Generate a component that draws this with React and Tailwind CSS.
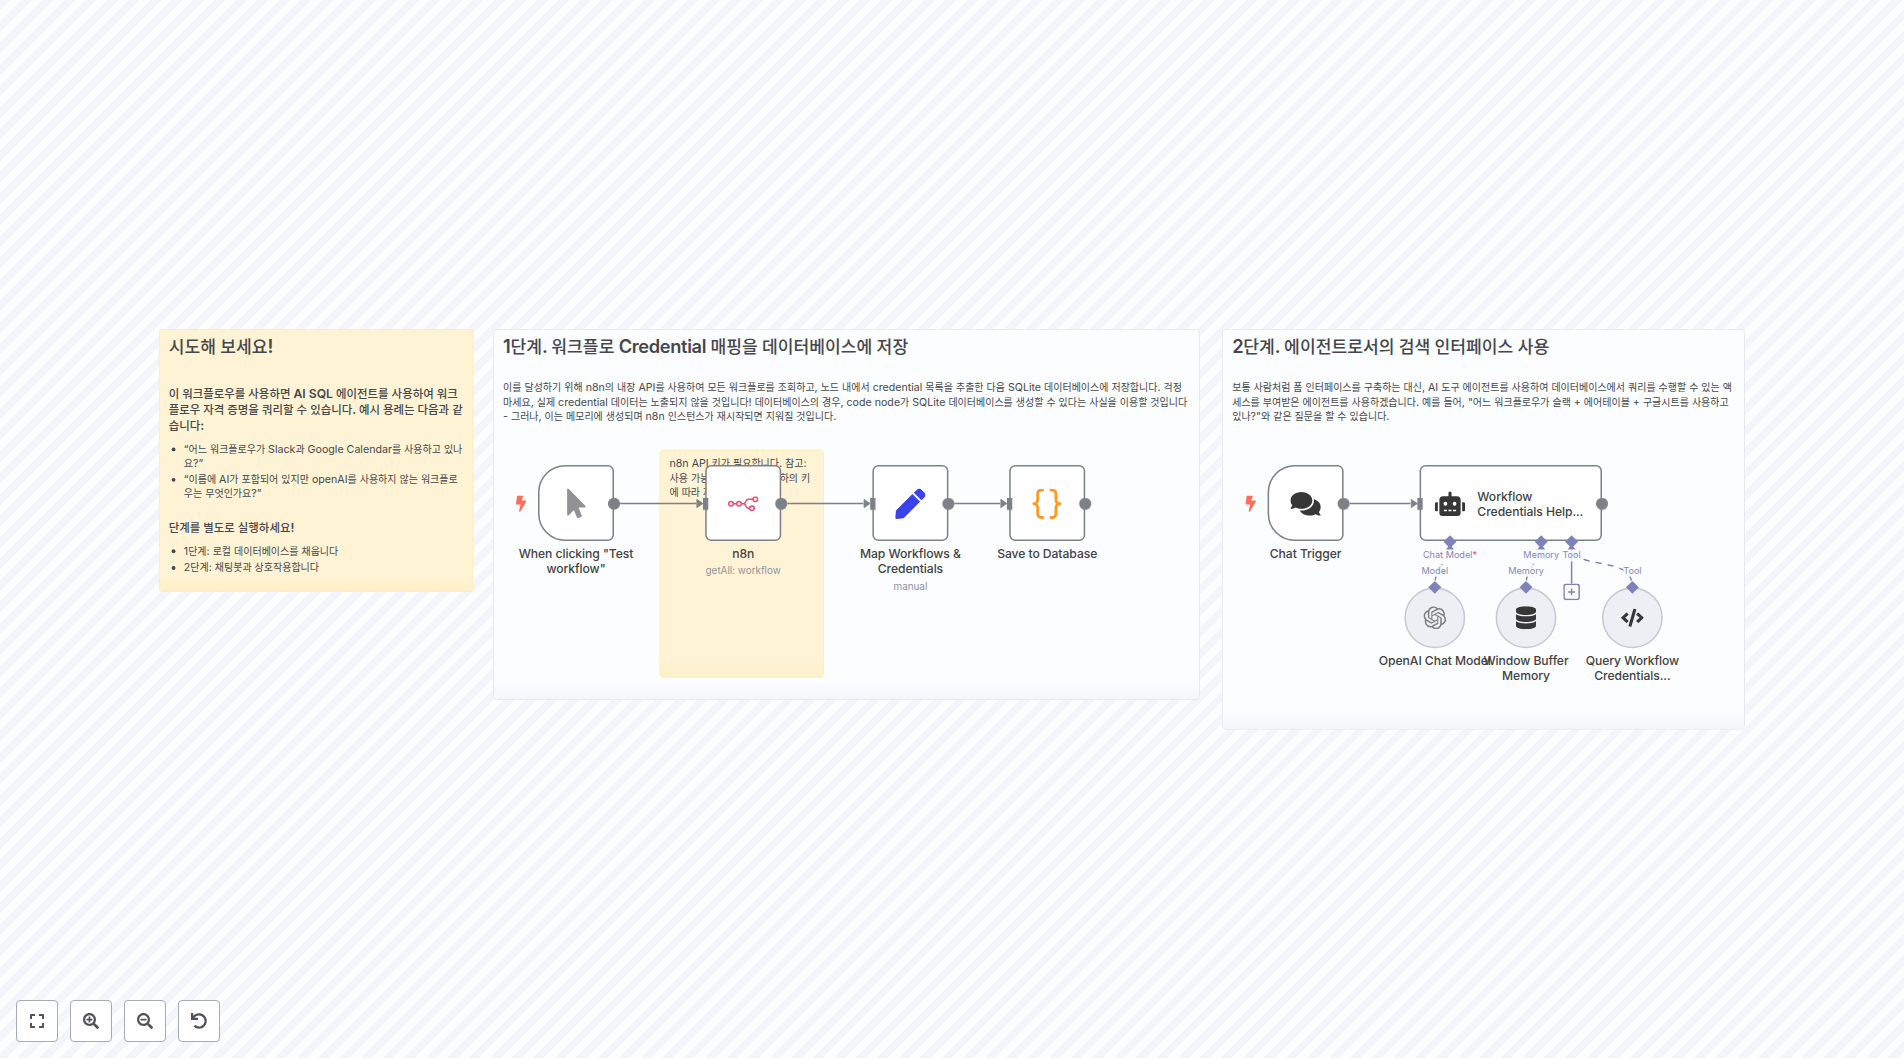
import React from "react";
import {
  FaMousePointer, FaPen, FaComments, FaRobot, FaDatabase, FaCode,
  FaBolt, FaExpand, FaSearchPlus, FaSearchMinus, FaUndo,
} from "react-icons/fa";
import { SiOpenai } from "react-icons/si";

const at = (x, y, w, h) => ({ left: x, top: y, width: w, height: h });

// Hangul runs are set slightly smaller than the Latin text around them.
function Ko({ children }) {
  return String(children).split(/([\uac00-\ud7a3]+)/).map((part, i) =>
    i % 2 ? <span key={i} className="text-[0.94em] leading-none tracking-normal">{part}</span> : part
  );
}

const Lines = ({ lines }) => lines.map((l) => <div key={l}><Ko>{l}</Ko></div>);

function Sticky({ x, y, w, h, yellow, children }) {
  return (
    <div
      style={at(x, y, w, h)}
      className={
        "absolute overflow-hidden rounded-[5px] border px-3 pt-2 whitespace-nowrap text-[#45474a] " +
        (yellow ? "border-[#ffe8a0] bg-[#fff3d6]" : "border-[#dfe1ea] bg-[#fcfdff]")
      }
    >
      {children}
      <div
        className={
          "absolute inset-x-0 bottom-0 h-6 bg-linear-to-b from-transparent " +
          (yellow ? "to-[#fff0c8]" : "to-[#f5f6fb]")
        }
      />
    </div>
  );
}

const Title = ({ children }) => (
  <h2 className="pt-[0.4px] text-[24px] leading-[30px] font-semibold tracking-[-0.44px] [&>span]:font-medium"><Ko>{children}</Ko></h2>
);

const Heading = ({ lines }) => (
  <h3 className="text-[16px] leading-[21px] font-semibold [&_span]:font-medium"><Lines lines={lines} /></h3>
);

function Bullets({ items }) {
  return (
    <ul className="mt-[10.300px] ml-5 list-disc space-y-1 text-[14px] leading-[18px]">
      {items.map((lines) => <li key={lines[0]}><Lines lines={lines} /></li>)}
    </ul>
  );
}

function Out({ x, y }) {
  return <div style={at(x - 8, y - 8, 16, 16)} className="absolute rounded-full bg-[#7d8187]" />;
}

function In({ x, y }) {
  return <div style={at(x - 3.5, y - 8, 7, 16)} className="absolute bg-[#7d8187]" />;
}

function Diamond({ x, y }) {
  return <div style={at(x - 6, y - 5.5, 12, 12)} className="absolute rotate-45 bg-[#7f82b8]" />;
}

function Label({ x, y, lines, sub }) {
  return (
    <div style={{ left: x - 100, top: y, width: 200 }} className="absolute text-center text-[16px] leading-[20px] font-medium tracking-[-0.1px] whitespace-nowrap text-[#414244]">
      {lines.map((l) => <div key={l}>{l}</div>)}
      {sub && <div className="mt-1 text-[13px] leading-[18px] font-normal tracking-normal text-[#909399]">{sub}</div>}
    </div>
  );
}

function Node({ x, w = 100, trigger, children }) {
  return (
    <div
      style={at(x, 0, w, 100)}
      className={
        "absolute flex items-center border-2 border-[#7d8187] bg-white pt-[1px] " +
        (trigger ? "rounded-[8px] rounded-l-[36px] " : "rounded-[8px] ") +
        (w > 100 ? "gap-4 pl-[18px]" : "justify-center")
      }
    >
      {children}
    </div>
  );
}

function SubNode({ x, children }) {
  return (
    <div style={at(x, 160.6, 80, 80)} className="absolute flex items-center justify-center rounded-full border-2 border-[#c3c9d8] bg-[#eeeff5]">
      {children}
    </div>
  );
}

function Port({ x, y, children }) {
  return (
    <div style={{ left: x - 50, top: y - 7.3, width: 100 }} className="absolute flex justify-center">
      <span className="bg-[#fcfdff]/85 text-[12px] leading-[16px] whitespace-nowrap text-[#8386bb]">{children}</span>
    </div>
  );
}

const Bolt = ({ x }) => (
  <FaBolt style={{ left: x - 33, top: 40 }} className="absolute size-[21.500px] text-[#ff6d5a]" />
);

function N8nLogo() {
  return (
    <svg viewBox="0 0 40 20" className="h-5 w-10" fill="none" stroke="#ea4b71" strokeWidth="2">
      <circle cx="4" cy="10" r="3" />
      <circle cx="14.5" cy="10" r="3" />
      <circle cx="36" cy="4" r="3" />
      <circle cx="31.5" cy="16" r="3" />
      <path d="M7 10h4.500M17.500 10h3c4 0 2-6 6-6h6.500M20.500 10c4 0 2 6 6 6h2" />
    </svg>
  );
}

function Braces() {
  return (
    <svg viewBox="0 0 40 40" className="size-10" fill="none" stroke="#ff9922" strokeWidth="3.800" strokeLinecap="round" strokeLinejoin="round">
      <path d="M14 2h-2a4.500 4.500 0 0 0-4.500 4.500v7.500c0 3.500-2 6-5 6 3 0 5 2.500 5 6v7.500A4.500 4.500 0 0 0 12 38h2" />
      <path d="M25 2h2a4.500 4.500 0 0 1 4.500 4.500v7.500c0 3.500 2 6 5 6-3 0-5 2.500-5 6v7.500A4.500 4.500 0 0 1 27 38h-2" />
    </svg>
  );
}

function Edges() {
  const runs = [[108, 208], [328, 428], [548, 608], [1068, 1148]];
  return (
    <svg className="absolute top-0 left-0 overflow-visible" width="1" height="1">
      {runs.map(([a, b]) => (
        <g key={a} transform="translate(0 0.7)">
          <path d={`M${a} 50H${b}`} stroke="#7d8187" strokeWidth="2" />
          <path d={`M${b + 1} 44.500l8 5.500-8 5.500z`} fill="#7d8187" stroke="#7d8187" />
        </g>
      ))}
      <g stroke="#7f82b8" strokeWidth="2" fill="none" strokeDasharray="8 8" strokeDashoffset="8">
        <path d="M1180 160C1180 128 1200 132 1200 104" />
        <path d="M1300 160C1300 128 1320 132 1320 104" />
        <path d="M1440 160C1440 116 1360 142 1360 104" />
      </g>
      <path d="M1360 108V156" stroke="#7f82b8" strokeWidth="2" />
      {[1200, 1320, 1360].map((x) => (
        <path key={x} d={`M${x} 104l5.500 8h-11z`} fill="#7f82b8" />
      ))}
    </svg>
  );
}

function Control({ children }) {
  return (
    <button className="flex size-[42px] items-center justify-center rounded-[4px] border border-[#a5a9bb] bg-white text-[16px] text-[#525356]">
      {children}
    </button>
  );
}

export default function App() {
  return (
    <div
      className="relative flex h-[1058px] w-[1904px] items-end overflow-hidden bg-[repeating-linear-gradient(135deg,#f4f5fa_0px,#f4f5fa_7.6px,#fcfdff_7.6px,#fcfdff_15.2px)]"
      style={{ fontFamily: '"Inter", "Noto Sans CJK KR", sans-serif' }}
    >
      <div className="absolute top-[465.300px] left-[538.300px] size-0 origin-top-left scale-[0.76]">
        <Sticky x={-499} y={-179} w={414} h={346} yellow>
          <Title>시도해 보세요!</Title>
          <div className="mt-[36px]">
            <Heading
              lines={[
                "이 워크플로우를 사용하면 AI SQL 에이전트를 사용하여 워크",
                "플로우 자격 증명을 쿼리할 수 있습니다. 예시 용례는 다음과 같",
                "습니다:",
              ]}
            />
          </div>
          <Bullets
            items={[
              ["“어느 워크플로우가 Slack과 Google Calendar를 사용하고 있나", "요?”"],
              ["“이름에 AI가 포함되어 있지만 openAI를 사용하지 않는 워크플로", "우는 무엇인가요?”"],
            ]}
          />
          <div className="mt-[26.700px]">
            <Heading lines={["단계를 별도로 실행하세요!"]} />
          </div>
          <Bullets items={[["1단계: 로컬 데이터베이스를 채웁니다"], ["2단계: 채팅봇과 상호작용합니다"]]} />
        </Sticky>

        <Sticky x={-59} y={-179} w={930} h={488}>
          <Title>1단계. 워크플로 Credential 매핑을 데이터베이스에 저장</Title>
          <div className="mt-[27.200px] text-[14px] leading-[19.300px]">
            <Lines
              lines={[
                "이를 달성하기 위해 n8n의 내장 API를 사용하여 모든 워크플로를 조회하고, 노드 내에서 credential 목록을 추출한 다음 SQLite 데이터베이스에 저장합니다. 걱정",
                "마세요, 실제 credential 데이터는 노출되지 않을 것입니다! 데이터베이스의 경우, code node가 SQLite 데이터베이스를 생성할 수 있다는 사실을 이용할 것입니다",
                "- 그러나, 이는 메모리에 생성되며 n8n 인스턴스가 재시작되면 지워질 것입니다.",
              ]}
            />
          </div>
        </Sticky>

        <Sticky x={900.4} y={-179} w={688} h={527}>
          <Title>2단계. 에이전트로서의 검색 인터페이스 사용</Title>
          <div className="mt-[27.200px] text-[14px] leading-[19.300px]">
            <Lines
              lines={[
                "보통 사람처럼 폼 인터페이스를 구축하는 대신, AI 도구 에이전트를 사용하여 데이터베이스에서 쿼리를 수행할 수 있는 액",
                "세스를 부여받은 에이전트를 사용하겠습니다. 예를 들어, \"어느 워크플로우가 슬랙 + 에어테이블 + 구글시트를 사용하고",
                "있나?\"와 같은 질문을 할 수 있습니다.",
              ]}
            />
          </div>
        </Sticky>

        <Sticky x={160} y={-20} w={216} h={300} yellow>
          <div className="text-[14px] leading-[18.900px]">
            <Lines lines={["n8n API 키가 필요합니다. 참고:", "사용 가능한 워크플로는 귀하의 키", "에 따라 제한됩니다."]} />
          </div>
        </Sticky>

        <Edges />

        <Bolt x={0} />
        <Node x={0} trigger><FaMousePointer className="size-[39px] text-[#909298]" /></Node>
        <Node x={220}><N8nLogo /></Node>
        <Node x={440}><FaPen className="size-10 text-[#3a42e9]" /></Node>
        <Node x={620}><Braces /></Node>
        <Bolt x={960} />
        <Node x={960} trigger><FaComments className="size-10 text-[#373737]" /></Node>
        <Node x={1160} w={240}>
          <FaRobot className="size-10 text-[#373737]" />
          <div className="text-[16px] leading-[20px] font-medium tracking-[-0.1px] whitespace-nowrap text-[#414244]">Workflow<br />Credentials Help...</div>
        </Node>

        {[100, 320, 540, 720, 1060, 1400].map((x) => <Out key={x} x={x} y={50.7} />)}
        {[220, 440, 620, 1160].map((x) => <In key={x} x={x} y={50.7} />)}

        <Label x={50} y={106} lines={['When clicking "Test', 'workflow"']} />
        <Label x={270} y={106} lines={["n8n"]} sub="getAll: workflow" />
        <Label x={490} y={106} lines={["Map Workflows &", "Credentials"]} sub="manual" />
        <Label x={670} y={106} lines={["Save to Database"]} />
        <Label x={1010} y={106} lines={["Chat Trigger"]} />

        <SubNode x={1140}><SiOpenai className="size-[30px] text-[#7d7d80]" /></SubNode>
        <SubNode x={1260}><FaDatabase className="size-[30px] text-[#373737]" /></SubNode>
        <SubNode x={1400}><FaCode className="size-[30px] text-[#373737]" /></SubNode>
        <Label x={1180} y={247} lines={["OpenAI Chat Model"]} />
        <Label x={1300} y={247} lines={["Window Buffer", "Memory"]} />
        <Label x={1440} y={247} lines={["Query Workflow", "Credentials..."]} />

        <Port x={1200} y={118}>Chat Model<span className="text-[#ff3344]">*</span></Port>
        <Port x={1320} y={118}>Memory</Port>
        <Port x={1360} y={118}>Tool</Port>
        <Port x={1180} y={138}>Model</Port>
        <Port x={1300} y={138}>Memory</Port>
        <Port x={1440} y={138}>Tool</Port>

        <Diamond x={1200} y={100} />
        <Diamond x={1320} y={100} />
        <Diamond x={1360} y={100} />
        <Diamond x={1180} y={160} />
        <Diamond x={1300} y={160} />
        <Diamond x={1440} y={160} />

        <svg style={at(1349, 155.5, 22, 22)} viewBox="0 0 22 22" className="absolute" fill="none" stroke="#7f82b8" strokeWidth="2">
          <rect x="1" y="1" width="20" height="20" rx="3" fill="#fcfdff" />
          <path d="M11 6.500v9M6.500 11h9" />
        </svg>
      </div>

      <div className="relative flex gap-3 pb-4 pl-4">
        <Control><FaExpand /></Control>
        <Control><FaSearchPlus /></Control>
        <Control><FaSearchMinus /></Control>
        <Control><FaUndo /></Control>
      </div>
    </div>
  );
}
